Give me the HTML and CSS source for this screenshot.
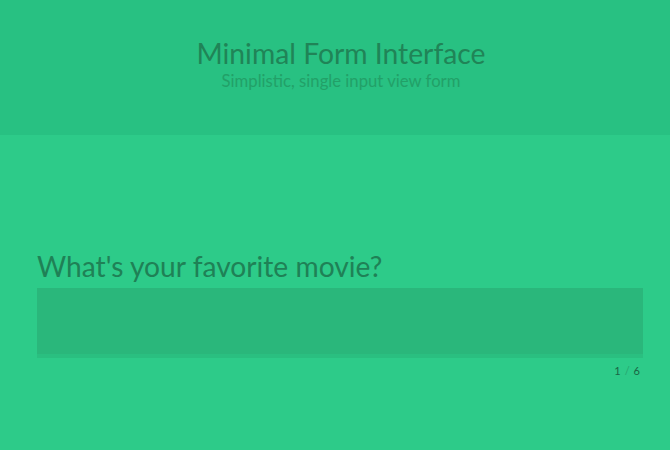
FILE: index.html
```html
<!DOCTYPE html>
<html>
<head>
<meta charset="utf-8">
<link rel="stylesheet" href="styles.css">
</head>
<body>
<header class="header">
  <h1 class="title">Minimal Form Interface</h1>
  <p class="subtitle">Simplistic, single input view form</p>
</header>
<main class="main">
  <form class="form">
    <label class="question" for="q1">What's your favorite movie?</label>
    <input class="answer" id="q1" type="text">
    <div class="counter"><span class="num">1</span><span class="sep">/</span><span class="num">6</span></div>
  </form>
</main>
</body>
</html>
```
FILE: styles.css
```css
html, body { margin: 0; padding: 0; }
body {
  background: #2dcb89;
  font-family: Lato, "Liberation Sans", sans-serif;
  height: 450px;
  overflow: hidden;
}
.header {
  background: #28c182;
  height: 135px;
  box-sizing: border-box;
  padding: 36px 0 0 12px;
  text-align: center;
}
.title {
  margin: 0;
  font-weight: 400;
  font-size: 28.3px;
  line-height: 34px;
  color: #208457;
}
.subtitle {
  margin: 0;
  font-weight: 400;
  font-size: 16.7px;
  line-height: 22px;
  color: #22a068;
}
.main {
  padding: 114px 27px 0 37px;
}
.form {
  display: flex;
  flex-direction: column;
}
.question {
  font-size: 28.2px;
  font-weight: 400;
  line-height: 34px;
  color: #1f8156;
  margin-bottom: 5px;
}
.answer {
  display: block;
  height: 70px;
  box-sizing: border-box;
  border: none;
  border-bottom: 4px solid #2abf80;
  background: #2ab77b;
  outline: none;
  margin: 0;
  padding: 0 10px;
}
.counter {
  align-self: flex-end;
  margin-top: 6px;
  font-size: 11px;
  line-height: 14px;
  color: #1a6645;
  padding-right: 3px;
}
.sep { color: #26a56f; margin: 0 4px; }
```
